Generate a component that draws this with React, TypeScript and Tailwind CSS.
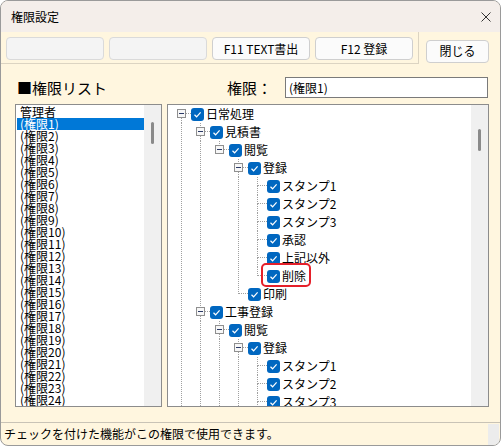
import React from 'react';

type TreeRow = {
  level: number;
  label: string;
  hasChildren?: boolean;
  hasNext: boolean;
  guides: boolean[];
  first?: boolean;
  marked?: boolean;
};

const roles = ['管理者', ...Array.from({ length: 24 }, (_, i) => `(権限${i + 1})`)];

const treeRows: TreeRow[] = [
  { level: 0, label: '日常処理', hasChildren: true, hasNext: true, guides: [], first: true },
  { level: 1, label: '見積書', hasChildren: true, hasNext: true, guides: [true] },
  { level: 2, label: '閲覧', hasChildren: true, hasNext: false, guides: [true, true] },
  { level: 3, label: '登録', hasChildren: true, hasNext: true, guides: [true, true, false] },
  { level: 4, label: 'スタンプ1', hasNext: true, guides: [true, true, false, true] },
  { level: 4, label: 'スタンプ2', hasNext: true, guides: [true, true, false, true] },
  { level: 4, label: 'スタンプ3', hasNext: true, guides: [true, true, false, true] },
  { level: 4, label: '承認', hasNext: true, guides: [true, true, false, true] },
  { level: 4, label: '上記以外', hasNext: true, guides: [true, true, false, true] },
  { level: 4, label: '削除', hasNext: false, guides: [true, true, false, true], marked: true },
  { level: 3, label: '印刷', hasNext: false, guides: [true, true, false] },
  { level: 1, label: '工事登録', hasChildren: true, hasNext: true, guides: [true] },
  { level: 2, label: '閲覧', hasChildren: true, hasNext: true, guides: [true, true] },
  { level: 3, label: '登録', hasChildren: true, hasNext: true, guides: [true, true, true] },
  { level: 4, label: 'スタンプ1', hasNext: true, guides: [true, true, true, true] },
  { level: 4, label: 'スタンプ2', hasNext: true, guides: [true, true, true, true] },
  { level: 4, label: 'スタンプ3', hasNext: true, guides: [true, true, true, true] },
];

const LINE = '#a0a0a0';

// guide column for an ancestor level
const Guide = ({ on }: { on: boolean }) => (
  <svg width="19" height="18" className="shrink-0">
    {on && <line x1="9.5" y1="0" x2="9.5" y2="18" stroke={LINE} strokeDasharray="1 1" />}
  </svg>
);

// connector + expander for the node itself
const Connector = ({ row }: { row: TreeRow }) => (
  <svg width="19" height="18" className="shrink-0">
    {!row.first && <line x1="9.5" y1="0" x2="9.5" y2="9" stroke={LINE} strokeDasharray="1 1" />}
    {row.hasNext && <line x1="9.5" y1="9" x2="9.5" y2="18" stroke={LINE} strokeDasharray="1 1" />}
    <line x1="10" y1="8.5" x2="19" y2="8.5" stroke={LINE} strokeDasharray="1 1" />
    {row.hasChildren && (
      <g>
        <rect x="5.5" y="4.5" width="8" height="8" fill="#f7f7f7" stroke="#8f8f8f" />
        <line x1="7" y1="8.5" x2="12" y2="8.5" stroke="#2b3a67" />
      </g>
    )}
  </svg>
);

const Check = () => (
  <span className="flex h-[13px] w-[13px] shrink-0 items-center justify-center rounded-[3px] bg-[#0067c0]">
    <svg width="9" height="9" viewBox="0 0 9 9">
      <path d="M1.5 4.8 L3.6 6.8 L7.6 2.4" fill="none" stroke="#fff" strokeWidth="1.2" />
    </svg>
  </span>
);

const Scrollbar = ({ thumbTop }: { thumbTop: string }) => (
  <div className="flex w-[17px] shrink-0 justify-center bg-[#f0f0f0]">
    <div className={`w-[3px] h-[22px] rounded-full bg-[#8a8a8a] ${thumbTop}`} />
  </div>
);

export default function App() {
  return (
    <div
      className="flex h-[446px] w-[501px] flex-col overflow-hidden rounded-lg border border-[#9a9a9a] bg-[#fff6df] text-black"
      style={{ fontFamily: '"Noto Sans CJK JP", "Noto Sans", sans-serif' }}
    >
      {/* title bar */}
      <div className="flex h-[31px] shrink-0 items-center bg-[#f4eeea] pl-[10px] pr-[9px]">
        <span className="flex-1 text-[12px]">権限設定</span>
        <svg width="10" height="10" viewBox="0 0 10 10">
          <path d="M0.5 0.5 L9.5 9.5 M9.5 0.5 L0.5 9.5" stroke="#333" strokeWidth="1" />
        </svg>
      </div>

      {/* toolbar */}
      <div className="flex h-[32px] shrink-0">
        <div className="flex w-[418px] gap-[5px] border-r border-b border-[#dcd4c2] pl-[5px] pt-[5px]">
          <button className="h-[23px] w-[98px] rounded-[4px] border border-[#dadada] bg-[#f4f4f4]" />
          <button className="h-[23px] w-[98px] rounded-[4px] border border-[#dadada] bg-[#f4f4f4]" />
          <button className="h-[23px] w-[98px] rounded-[4px] border border-[#cfcfcf] bg-[#fbfbfb] text-[12px]">
            F11 TEXT書出
          </button>
          <button className="h-[23px] w-[98px] rounded-[4px] border border-[#cfcfcf] bg-[#fbfbfb] text-[12px]">
            F12 登録
          </button>
        </div>
        <div className="pl-[7px] pt-[5px]">
          <button className="h-[23px] w-[63px] rounded-[4px] border border-[#cfcfcf] bg-[#fbfbfb] text-[12px]">
            閉じる
          </button>
        </div>
      </div>

      {/* main */}
      <div className="flex h-[358px] shrink-0 flex-col pl-[14px] pt-[13px]">
        <div className="flex h-[21px] items-center">
          <span className="w-[152px] pl-[2px] text-[15px] leading-none">■権限リスト</span>
          <span className="ml-[60px] text-[15px] leading-none">権限：</span>
          <div className="ml-[13px] flex h-[21px] w-[203px] items-center border border-[#7a7a7a] bg-white pl-[3px] text-[12px]">
            (権限1)
          </div>
        </div>

        <div className="mt-[6px] flex h-[303px] gap-[5px]">
          {/* role list */}
          <div className="flex w-[147px] border border-[#8c8c8c] bg-white">
            <div className="flex-1 overflow-hidden pt-[1px] pl-[1px] text-[12px] leading-[12px]">
              {roles.map((r, i) => (
                <div
                  key={r}
                  className={`h-[12px] pl-[3px] whitespace-nowrap ${i === 1 ? 'bg-[#0078d7] text-white' : ''}`}
                >
                  {r}
                </div>
              ))}
            </div>
            <Scrollbar thumbTop="mt-[17px]" />
          </div>

          {/* permission tree */}
          <div className="flex w-[322px] border border-[#8c8c8c] bg-white">
            <div className="flex-1 overflow-hidden pl-[4px] text-[12px]">
              {treeRows.map((row, i) => (
                <div key={i} className="flex h-[18px] items-center">
                  {row.guides.map((g, j) => (
                    <Guide key={j} on={g} />
                  ))}
                  <Connector row={row} />
                  <div className="relative flex items-center">
                    <Check />
                    <span className="ml-[2px] leading-[18px] whitespace-nowrap">{row.label}</span>
                    {row.marked && (
                      <div className="pointer-events-none absolute -top-[4px] -bottom-[2px] -left-[6px] -right-[5px] rounded-[5px] border-2 border-[#e5202a]" />
                    )}
                  </div>
                </div>
              ))}
            </div>
            <Scrollbar thumbTop="mt-[24px]" />
          </div>
        </div>
      </div>

      {/* status bar */}
      <div className="flex h-[23px] shrink-0 border-t border-[#c9c3b6]">
        <span className="flex-1 pl-[3px] text-[12px] leading-[22px]">
          チェックを付けた機能がこの権限で使用できます。
        </span>
        <div className="mr-[1px] mt-[1px] w-[11px] bg-[#ececec]" />
      </div>
    </div>
  );
}
